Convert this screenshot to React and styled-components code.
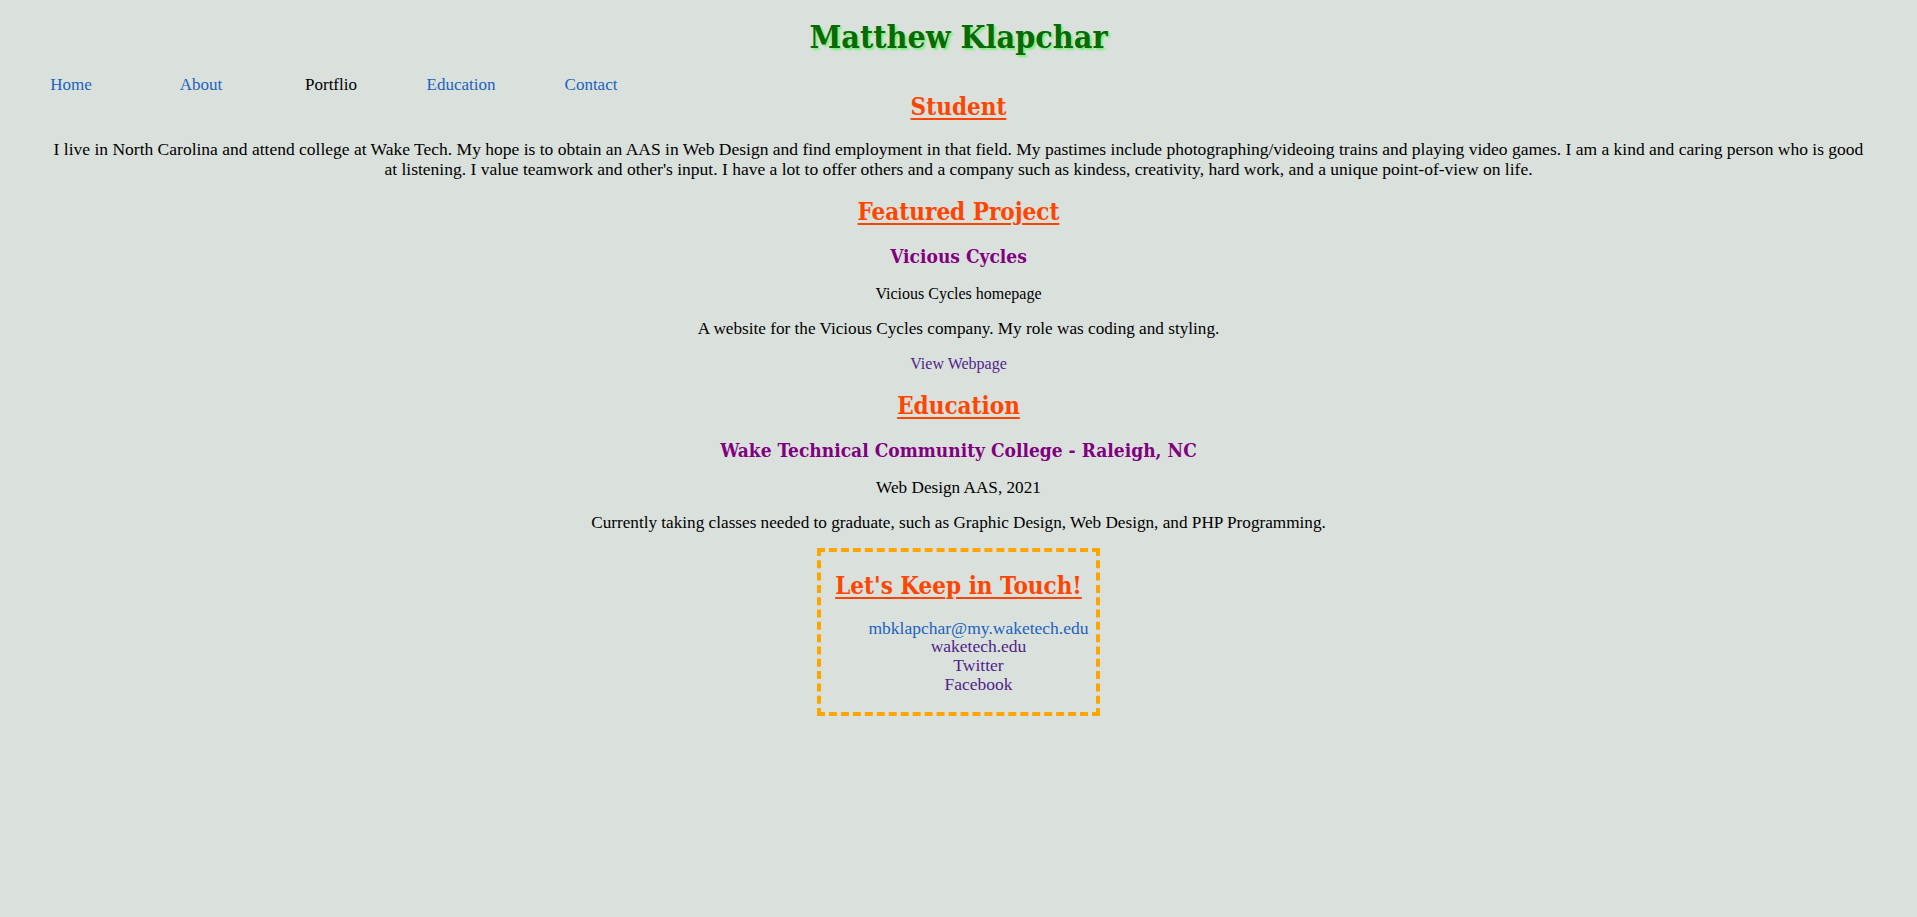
import React from 'react'
import styled, { createGlobalStyle } from 'styled-components'

const GlobalStyle = createGlobalStyle`
  body {
    margin: 0;
    background: #dae1dd;
    color: #000000;
    font-family: "Liberation Serif", serif;
  }
`

const headingFont = `
  font-family: "DejaVu Serif Condensed", "DejaVu Serif", serif;
  font-stretch: condensed;
  font-weight: bold;
`

const Page = styled.div`
  padding: 8px;
  text-align: center;
`

const Title = styled.h1`
  ${headingFont}
  margin: 9px 0 0 0;
  font-size: 32px;
  line-height: 40px;
  color: #066a06;
  text-shadow: 2px 2px 2px #7cf07c;
`

const Nav = styled.nav`
  display: flex;
  margin: 19px 0 0 -2px;
  height: 17px;
`

const NavItem = styled.a`
  width: 130px;
  text-align: center;
  font-size: 17px;
  line-height: 18px;
  text-decoration: none;
  color: ${(p) => (p.$current ? '#000000' : '#1b63bf')};
`

const SectionTitle = styled.h2`
  ${headingFont}
  margin: ${(p) => (p.$first ? '0' : '19px')} 0 0 0;
  font-size: 24px;
  line-height: 28px;
  color: #ff4500;
  text-decoration: underline;
  text-decoration-thickness: 2px;
  text-underline-offset: 3px;
`

const SubTitle = styled.h3`
  ${headingFont}
  margin: 18px 0 0 0;
  font-size: 19px;
  line-height: 24px;
  color: #800080;
`

const Intro = styled.p`
  margin: 19px 0 0 0;
  padding: 0 42px;
  font-size: 17.5px;
  line-height: 19.5px;
`

const Caption = styled.p`
  margin: 17px 0 0 0;
  font-size: 16px;
  line-height: 18px;
`

const Text = styled.p`
  margin: 16px 0 0 0;
  font-size: 17.2px;
  line-height: 19.5px;
`

const ViewLink = styled.a`
  display: block;
  margin: 16px 0 0 0;
  font-size: 16px;
  line-height: 18px;
  color: #4f1f88;
  text-decoration: none;
`

const ContactBox = styled.div`
  box-sizing: border-box;
  width: 283px;
  margin: 15px auto 0 auto;
  padding: 1px 6px 19px 6px;
  border: 4px dashed #ffa500;
`

const ContactList = styled.ul`
  margin: 19px 0 0 0;
  padding: 0 0 0 40px;
  list-style: none;
`

const ContactItem = styled.li`
  font-size: 17.5px;
  line-height: 18.7px;
`

const ContactLink = styled.a`
  text-decoration: none;
  color: ${(p) => (p.$visited ? '#4f1f88' : '#1b63bf')};
`

const navLinks = [
  { label: 'Home' },
  { label: 'About' },
  { label: 'Portflio', current: true },
  { label: 'Education' },
  { label: 'Contact' },
]

const contacts = [
  { label: 'mbklapchar@my.waketech.edu', visited: false },
  { label: 'waketech.edu', visited: true },
  { label: 'Twitter', visited: true },
  { label: 'Facebook', visited: true },
]

export default function App() {
  return (
    <Page>
      <GlobalStyle />
      <Title>Matthew Klapchar</Title>
      <Nav>
        {navLinks.map((link) => (
          <NavItem key={link.label} $current={link.current}>
            {link.label}
          </NavItem>
        ))}
      </Nav>

      <SectionTitle $first>Student</SectionTitle>
      <Intro>
        I live in North Carolina and attend college at Wake Tech. My hope is to
        obtain an AAS in Web Design and find employment in that field. My
        pastimes include photographing/videoing trains and playing video games.
        I am a kind and caring person who is good at listening. I value teamwork
        and other's input. I have a lot to offer others and a company such as
        kindess, creativity, hard work, and a unique point-of-view on life.
      </Intro>

      <SectionTitle>Featured Project</SectionTitle>
      <SubTitle>Vicious Cycles</SubTitle>
      <Caption>Vicious Cycles homepage</Caption>
      <Text>
        A website for the Vicious Cycles company. My role was coding and
        styling.
      </Text>
      <ViewLink>View Webpage</ViewLink>

      <SectionTitle>Education</SectionTitle>
      <SubTitle>Wake Technical Community College - Raleigh, NC</SubTitle>
      <Text>Web Design AAS, 2021</Text>
      <Text>
        Currently taking classes needed to graduate, such as Graphic Design, Web
        Design, and PHP Programming.
      </Text>

      <ContactBox>
        <SectionTitle>Let's Keep in Touch!</SectionTitle>
        <ContactList>
          {contacts.map((c) => (
            <ContactItem key={c.label}>
              <ContactLink $visited={c.visited}>{c.label}</ContactLink>
            </ContactItem>
          ))}
        </ContactList>
      </ContactBox>
    </Page>
  )
}
